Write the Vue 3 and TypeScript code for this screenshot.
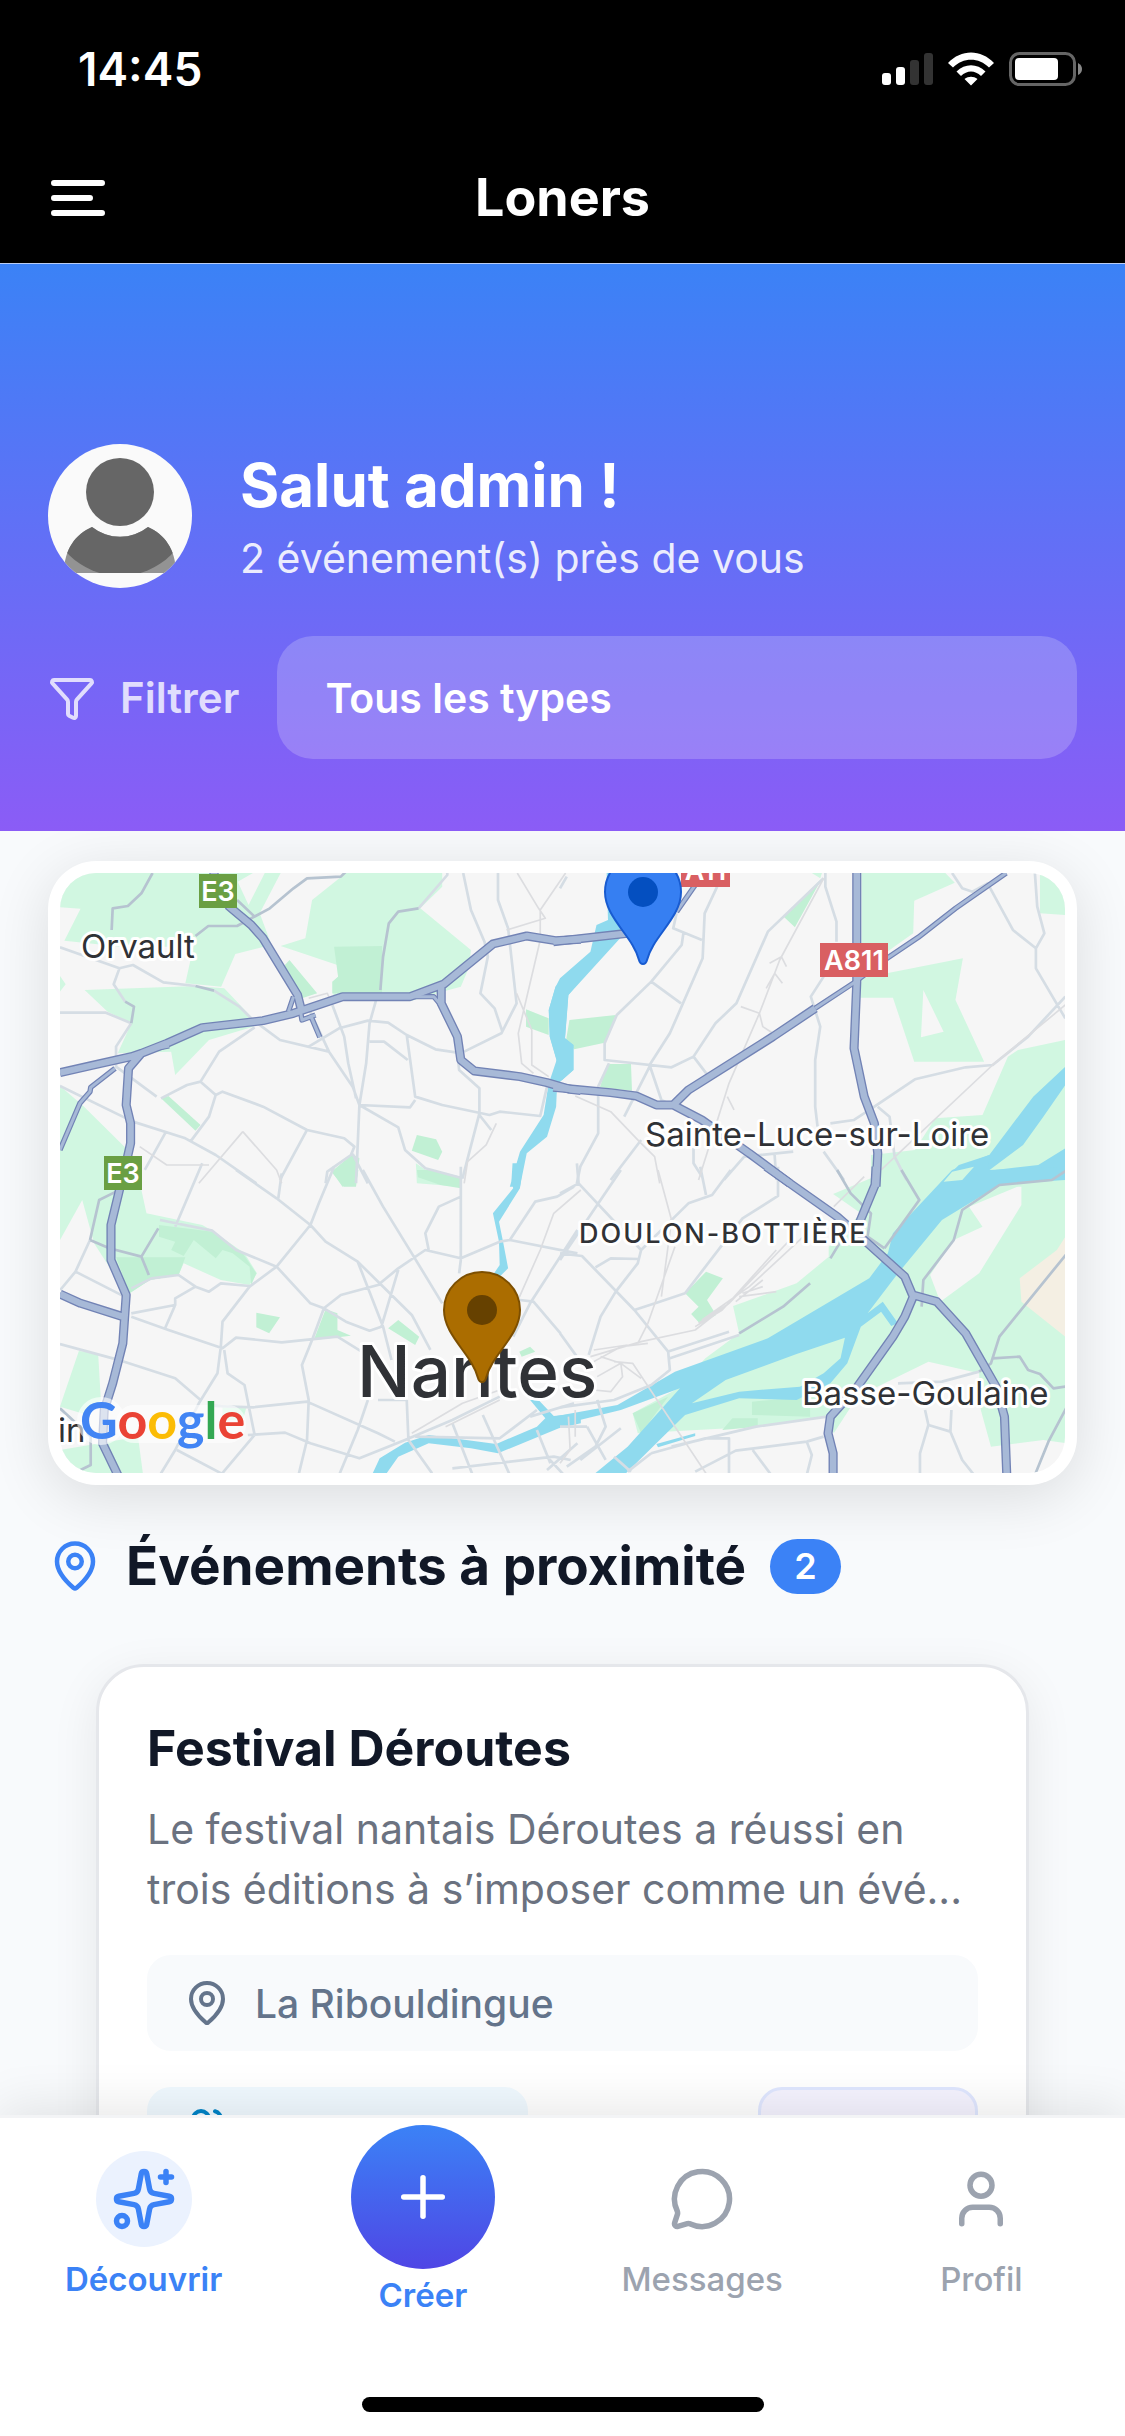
<script setup lang="ts">
import { ref } from 'vue'

interface Tile {
  transform: string
  meadow: string
  park: string
  river: string
  island: string
  sand: string
  street: string
  rail: string
  road: string
  ramp: string
  motorway: string
}

interface Tab {
  label: string
  active: boolean
  create: boolean
  paths: string[]
  circles: { cx: number; cy: number; r: number }[]
}

const eventType = ref('all')
const eventCount = 2

const pinPath =
  'M20 10c0 4.993-5.539 10.193-7.399 11.799a1 1 0 0 1-1.202 0C9.539 20.193 4 14.993 4 10a8 8 0 0 1 16 0'
const markerPath =
  'M-38 0A38 38 0 1 1 38 0C38 26 10 44 4 68Q3 72 0 72Q-3 72-4 68C-10 44-38 26-38 0Z'

// Each tile is digitised on its own grid, about three units to a map pixel.
const tiles: Tile[] = [
  {
    transform: 'translate(-20 -23) scale(.338 .3333)',
    meadow:
      'M59 69H630L585 95L617 165L665 69H712L650 190L685 285L578 312L536 410L430 400L460 262L400 290H240L72 272L120 176L59 172Z M905 69H1190V110L1125 175L1275 300L1270 350L1245 410L1190 425L1100 452H880L865 430V395L882 380L880 345L712 288L785 265L805 150Z M132 420L460 408L545 415L625 500L630 530L500 570L400 675L388 605L230 610L270 520L200 485Z M59 378L76 403L59 425Z M59 708L125 765L250 890V1000H59Z M1112 940L1142 960L1245 985V1010L1115 1000Z',
    park: 'M870 290L1012 288V428L865 430V395L882 380Z M738 330L820 430L775 445L720 350Z M358 745L380 738L475 825L460 842Z M1115 855L1172 868L1190 905L1178 930L1100 902Z M925 912L945 925L935 1010H900L862 965Z M1438 478L1505 505V555L1438 530Z',
    river:
      'M1600 340L1568 365L1525 410L1505 480L1508 560L1528 630L1525 690L1505 700L1490 795L1420 905L1390 1010H1420L1440 910L1500 860L1527 770L1530 700L1545 690L1578 660V585L1553 565L1563 435L1600 390Z',
    island: '',
    sand: '',
    street:
      'M59 292L235 355L275 345L365 397L460 408M515 422L590 470L630 510L710 570L855 605L925 710L945 765L1060 832L1080 900L1140 955L1250 985M235 355L218 403L252 455M270 520L225 590V650L345 740M59 488H195L270 520M855 605L795 475M795 590L885 535L970 512L1030 518L1085 555L1170 598L1235 608M865 465L900 560L912 640L935 745M1000 430L975 520L965 640L945 765L935 1000M975 575H1018L1088 630M1085 555L1110 740L1190 765L1330 795L1360 785L1480 798L1500 710M945 765L1095 772L1110 750M1255 605L1365 550L1410 460L1385 235L1355 150V69M1205 69V75L1120 175M1252 69L1275 180L1315 275L1325 320L1303 430L1345 475L1368 545M59 708L275 815L430 865L520 915L640 1000M358 745L435 705L475 695L520 735L500 800L445 875M475 695L530 605L635 532M520 735L540 725L660 770L790 840L900 865L930 890L920 915L850 965L845 1000M790 840L710 990M370 850L310 960M925 912L970 1000M1235 608L1240 660L1300 715V790L1250 985M1300 795L1335 840',
    rail: 'M1412 69L1475 175L1495 205L1380 240M1555 69L1480 180V270L1415 550L1425 640L1460 670M1410 430L1455 540V645L1505 680M1350 820L1320 885L1265 935L1255 1000M600 845L470 1000M600 845L700 960L715 1000M295 890L375 945H500M795 445L850 430L865 465',
    road: 'M212 240L215 175L260 168L300 130L333 69M460 258L498 228H583L680 175L750 115L790 85L890 80L905 65M1007 420L1015 320L1032 220L1060 185L1120 175M460 408L515 422M252 455L278 470L270 520M583 150L635 200',
    ramp: 'M59 900L118 760L148 725L150 712L222 655M750 440L735 485M770 480L775 510L815 495M320 600L382 588M800 495L828 562M1095 440H1165L1190 470',
    motorway:
      'M59 668L160 645L270 620L300 610L375 580L480 533L660 512L750 490L895 440H1095L1195 402L1340 282L1440 258L1525 272L1600 268M512 60L520 90L560 170L625 225L660 265L762 435L772 475M300 610L262 655L255 765L268 820V880L258 925M1187 410V460L1235 560L1245 630L1285 663L1420 680L1500 698L1568 718L1600 722',
  },
  {
    transform: 'translate(500 -23) scale(.338 .3333)',
    meadow:
      'M892 69H1140L1168 98L1048 152L1045 250L892 360Z M892 385L1192 325L1170 450L1255 635H1048L985 443H888ZM1075 420L1135 545L1068 562Z M1420 75H1495V195L1420 190Z M1495 570L1355 600L1325 620L1250 795L1110 805L1050 900L920 915V1010H1495Z M745 69H775L770 85Z',
    park: 'M775 85L695 232L662 200Z M28 510L165 495L132 578L42 598L18 570Z M140 642H210L213 722L118 712Z',
    river:
      'M138 69H260L200 240L25 435L15 565L40 585V660L0 695L-20 710L-33 700L-10 630L-30 560L-33 480L-13 410L0 385L90 305L108 225L142 210Z M1125 1000L1180 945L1270 915L1400 740L1495 650V705L1430 800L1370 885L1268 962L1415 945L1495 895V990L1190 1010Z',
    island: '',
    sand: '',
    street:
      'M465 110L428 190L422 325L325 550L265 645L300 750L400 800M420 270L335 235L345 190M365 250L360 285L270 395L168 495L132 580V630L330 652L395 620L440 680M270 395L358 460M395 620L460 520L522 460L615 245L780 85M785 69V110L818 215V275M780 380L742 440L770 530L755 630V770L762 830M145 640L113 710V850L60 950L50 1000M265 650L190 800M150 990L240 870M930 770L1050 688L1200 652L1280 645L1385 560L1495 440M930 770L870 810L800 820M940 770L975 800L990 920L1025 990M1160 69L1190 115L1220 125L1265 100L1340 240L1408 295V355L1495 505M1405 69L1412 170L1433 250L1408 295M0 115L20 80M485 990L545 920L690 905M395 880V940L420 980M635 915L640 990M780 905L840 990',
    rail: 'M780 85L650 330L590 490L500 700L410 990M45 738L150 785L240 880L280 920L295 1000M1495 465L1280 645L950 960M590 490L600 530L630 550M535 470L590 490M620 340L655 320L670 350M610 415L635 370L658 400M495 740L515 780',
    road: '',
    ramp: 'M755 475L870 398L960 330L1060 262L1170 175L1320 69M345 185L400 105',
    motorway:
      'M-20 275L200 250M-20 712L150 728L225 738L285 765H335L420 810L560 910L680 1000M335 765L380 720L630 560L755 475M878 60V398L870 595L900 740L930 820L940 910L935 1010',
  },
  {
    transform: 'translate(-20 297) scale(.338 .3333)',
    meadow:
      'M59 20V210L125 90L160 220L230 330L265 370L325 330L410 315L425 280L535 330L620 345L642 310L605 250L510 182L480 165L315 130L300 60V0L250-70H59Z M115 543L172 550L180 690L140 735L59 710Z M59 840L290 800L305 915H59Z M540 712L610 715L600 750H540Z',
    park: 'M352 165L510 185L600 250L640 310L625 345L620 290L570 250L540 240L520 265L455 210L425 258L388 240L400 215L352 200Z M225 262H430L410 315L325 330L265 370Z M640 428L710 442L678 490L640 472Z M845 418L880 430V480L920 497L810 510Z M1060 450L1122 500L1110 525L1030 475Z M860 0H942L935 40L895 50Z M1115 0H1160L1245 20V55L1185 45L1118 22Z M1418 545L1450 530L1465 545L1425 560Z',
    river:
      'M1398-20L1395 30L1400 55L1340 130L1358 215L1360 285L1330 330H1350L1385 295L1370 215L1358 155L1420 55L1430-20Z M982 915L1005 865L1080 818L1150 795L1350 822L1470 770L1495 745L1450 690H1475L1520 738L1600 730V760L1535 775L1355 850L1275 835L1150 820L1060 860L1022 915Z',
    island: '',
    sand: '',
    street:
      'M480-20L400 170M580 0L700 85L800 165L845 215L940 275L1010 345L1100 435L1155 540M715 10L705 85M870-10L825 100L800 165L700 290L620 350L540 455L535 530L525 610L470 700L400 840L355 915M355 150L510 182L580 240L700 290L800 400L840 415L905 455L975 482L1010 470L1060 300M270 440L380 480L540 535L580 503L715 517L880 500L960 550M545 540L555 610L605 645L635 795L535 915M59 522L240 572L400 625L475 690M955 0L1015 110L1100 250L1190 400M1245-10V270L1240 310M1245 80L1180 110L1140 190L1150 240M1360 215L1245 265L1140 240L1060 295L1000 345L890 375L840 415L805 510L775 585L795 690L790 810L765 915M940 275L1015 470L1040 570M405 840L545 915M615 795L725 788L800 820L945 865L1080 810L1220 750L1360 680M515 708L630 712L790 695L1000 790L1050 815M1000 690H1085M970 690L940 780L885 915M1085 690L1090 810L1160 910M1360 215L1390 210L1590 250M1390 210L1465 95L1530 80L1580 50M1590 180L1450 400L1400 500M1420 390L1460 395L1540 490M148 210L105 305L60 360M105 305L250 380M270 355L330 325L410 315L460 350L500 365L535 340L620 348M270 430L400 405V385L460 350M400 405L370 475M1220 760L1280 915M1310 735L1390 915M1110 800L1360 805L1470 720M1220 895L1520 860L1570 870M1450 740L1580 700M1500 860L1550 915M1500 900L1590 820M1470 780L1510 880',
    rail: 'M1600 60L1520 130L1480 240L1410 400M1100 790L1250 700L1360 660M1200 770L1360 690',
    road: 'M148 210L205 235L300 260L350 175M300 260L322 315M148 210L175 90L225 65M59 715L150 800V885L120 900',
    ramp: '',
    motorway:
      'M258-35L235 60L210 165V270L255 375L245 520L215 640L190 720L185 820L235 925M59 372L120 400L245 440',
  },
  {
    transform: 'translate(500 297) scale(.338 .3333)',
    meadow:
      'M775 10L808 72L930 20L1050-40H1500V820L1430 810L1275 830L1245 720L1240 610L1090 575L960 640L880 680L810 790L790 740L580 770L230 790L215 730L350 655L430 565L530 490L512 408L700 340L795 260V230L890 130L808 72Z M1210 110L1365 45V105L1240 310L1125 395L1095 315L1165 210L1250 170Z',
    park: 'M432 305L482 325L435 390L462 435L415 462L388 432L410 410L370 370Z M215 730L320 680L240 790Z M480 780L510 745H585V770Z M568 695L740 680V740L568 735Z',
    river:
      'M-30 742L170 705L340 605L615 505L915 325L970 250L985 190L1160 0L1270-45L1268 0L1495-10V18L1300 45L1130 150L1000 310L910 430L890 470L850 580L800 640L700 690L530 685L370 735L285 820L190 915H98L200 830L355 655L180 720L-30 772Z M910 430L955 395L1000 460L980 468L950 425L890 470Z M285 822L400 790V798L290 832Z',
    island: 'M390 700L490 630L700 552L843 503L830 565L780 610L710 650L530 665Z M1135 35L1160 5L1225-10L1190 30Z',
    sand: 'M1495 200L1470 240L1360 325L1365 395L1495 500Z',
    street:
      'M0 70L55 40L50-20M55 40L240 240M0 270L180 0M0 250L65 258L220 420L320 545L325 600L270 645L160 690L0 712M240 240L230 280L165 365L120 440L85 555M105 292L150 265L235 267M240 240L380 100L450 75L505 0M415-10L432 75M645-10V78L540 145L370 370L295 395L220 420M325 565L530 495M318 545L500 485M0 490L50 560M270 850L430 805H500V915M400 905L520 842L730 815L780 800M570 840L625 915M730 815L745 855L730 915M330 830L580 770L790 740M200 905L270 850M160 860L210 905M1080 720L1090 765L1065 850V915M1090 765L1155 785L1190 870L1225 915M1155 785L1158 720M1000 640L1130 635L1240 605M110 690L135 770L105 830L20 890M80 770L135 870M0 770H80M180 775L60 870',
    rail: 'M290 0L330 150L300 380M340 230L260 460L230 520M410 460L500 400L680 210M420 450L560 350L720 200M400 470L480 420L640 240M520 395L600 330M530 380L640 365M540 370L600 350M90 560L240 515L400 480L500 400M100 575L180 530L260 520M120 560L180 580L185 620L150 665L100 660M160 575L215 580L435 915M100 540L200 525M900 20L810 110M25 740L30 840L0 880M45 720V800M110 620L180 580L240 625',
    road: 'M530 490L660 410L740 340M800 265L830 215M1070 410L1075 330L1165 210L1190 120L1300 45L1455 30L1500 0M1500 250L1300 500L1275 580L1240 605M1280 565L1360 560L1385 600L1420 612L1460 655L1495 650M1500 710L1445 815L1405 915M960 235L1063 90L1010 0M820 0L860 70L920 130L910 200L960 235',
    ramp: '',
    motorway:
      'M610-10L820 140L905 215L1020 320L1045 380L1020 440L985 500L880 650L800 740L793 790L808 850V920M935-10L932 45L885 160M1045 375L1115 395L1200 490L1290 650L1315 740L1322 920',
  },
]

const layers = ['meadow', 'park', 'sand', 'river', 'island', 'street', 'rail', 'road'] as const

const shields = [
  { name: 'E3', x: 139, y: 1, width: 38, kind: 'euro' },
  { name: 'E3', x: 44, y: 283, width: 38, kind: 'euro' },
  { name: 'A811', x: 760, y: 70, width: 68, kind: 'auto' },
  { name: 'A11', x: 621, y: -20, width: 49, kind: 'auto' },
]

const tabs: Tab[] = [
  {
    label: 'Découvrir',
    active: true,
    create: false,
    paths: [
      'M11.017 2.814a1 1 0 0 1 1.966 0l1.051 5.558a2 2 0 0 0 1.594 1.594l5.558 1.051a1 1 0 0 1 0 1.966l-5.558 1.051a2 2 0 0 0-1.594 1.594l-1.051 5.558a1 1 0 0 1-1.966 0l-1.051-5.558a2 2 0 0 0-1.594-1.594l-5.558-1.051a1 1 0 0 1 0-1.966l5.558-1.051a2 2 0 0 0 1.594-1.594z',
      'M20 2v4',
      'M22 4h-4',
    ],
    circles: [{ cx: 4, cy: 20, r: 2 }],
  },
  { label: 'Créer', active: true, create: true, paths: ['M5 12h14', 'M12 5v14'], circles: [] },
  {
    label: 'Messages',
    active: false,
    create: false,
    paths: [
      'M2.992 16.342a2 2 0 0 1 .094 1.167l-1.065 3.29a1 1 0 0 0 1.236 1.168l3.413-.998a2 2 0 0 1 1.099.092 10 10 0 1 0-4.777-4.719',
    ],
    circles: [],
  },
  {
    label: 'Profil',
    active: false,
    create: false,
    paths: ['M19 21v-2a4 4 0 0 0-4-4H9a4 4 0 0 0-4 4v2'],
    circles: [{ cx: 12, cy: 7, r: 4 }],
  },
]
</script>

<template>
  <div class="app">
    <header class="top">
      <div class="status">
        <span class="time">14:45</span>
        <svg class="status-icons" viewBox="0 0 201 34" aria-hidden="true">
          <rect x="0" y="21" width="9" height="12" rx="3" fill="#fff" />
          <rect x="14" y="15" width="9" height="18" rx="3" fill="#fff" />
          <rect x="28" y="8" width="9" height="25" rx="3" fill="#333" />
          <rect x="42" y="1" width="9" height="32" rx="3" fill="#333" />
          <path
            fill="#fff"
            d="M66 11C79-3 99-3 112 11L107 15.500C97 5 81 5 71 15.500ZM74.500 19.500C83 11 95 11 103.500 19.500L99 24C93 18 85 18 79 24ZM82.500 27C86.500 24 91.500 24 95.500 27L89 33.500Z"
          />
          <rect x="128.500" y="1.500" width="64" height="31" rx="9" fill="none" stroke="#666" stroke-width="3" />
          <rect x="133" y="6" width="43" height="22" rx="4" fill="#fff" />
          <path d="M196 11Q200 13 200 17T196 23Z" fill="#888" />
        </svg>
      </div>
      <div class="bar">
        <button class="menu" type="button" aria-label="Menu">
          <svg viewBox="0 0 54 36" aria-hidden="true">
            <path d="M3 3H51M3 18H39M3 33H51" fill="none" stroke="#fff" stroke-width="6" stroke-linecap="round" />
          </svg>
        </button>
        <h1 class="brand">Loners</h1>
      </div>
    </header>

    <main class="page">
      <section class="hero">
        <div class="welcome">
          <svg class="avatar" viewBox="0 0 144 144" role="img" aria-label="Avatar">
            <clipPath id="disc"><circle cx="72" cy="72" r="72" /></clipPath>
            <clipPath id="chest"><circle cx="72" cy="60" r="72" /></clipPath>
            <g clip-path="url(#disc)">
              <rect width="144" height="144" fill="#fafafa" />
              <circle cx="72" cy="48" r="34" fill="#666" />
              <path d="M16 129C16 105 28 90 44 83A45 45 0 0 0 100 83C116 90 128 105 128 129Z" fill="#939393" />
              <path
                clip-path="url(#chest)"
                d="M16 129C16 105 28 90 44 83A45 45 0 0 0 100 83C116 90 128 105 128 129Z"
                fill="#666"
              />
            </g>
          </svg>
          <div class="greeting">
            <h2>Salut admin !</h2>
            <p>{{ eventCount }} événement(s) près de vous</p>
          </div>
        </div>
        <div class="filter">
          <label for="event-type">
            <svg class="icon" viewBox="0 0 24 24" aria-hidden="true">
              <path
                d="M10 20a1 1 0 0 0 .553.895l2 1A1 1 0 0 0 14 21v-7a2 2 0 0 1 .517-1.341L21.740 4.670A1 1 0 0 0 21 3H3a1 1 0 0 0-.742 1.670l7.225 7.989A2 2 0 0 1 10 14z"
              />
            </svg>
            Filtrer
          </label>
          <select id="event-type" v-model="eventType">
            <option value="all">Tous les types</option>
          </select>
        </div>
      </section>

      <section class="map-card">
        <svg class="map" viewBox="0 0 1005 600" preserveAspectRatio="xMidYMid slice">
          <rect width="1005" height="600" fill="#f6f6f6" />
          <g v-for="layer in layers" :key="layer">
            <path v-for="(tile, i) in tiles" :key="i" :class="layer" :transform="tile.transform" :d="tile[layer]" />
          </g>
          <g class="casing">
            <g v-for="(tile, i) in tiles" :key="i" :transform="tile.transform">
              <path class="ramp" :d="tile.ramp" />
              <path class="motorway" :d="tile.motorway" />
            </g>
          </g>
          <g class="surface">
            <g v-for="(tile, i) in tiles" :key="i" :transform="tile.transform">
              <path class="ramp" :d="tile.ramp" />
              <path class="motorway" :d="tile.motorway" />
            </g>
          </g>
          <g v-for="(shield, i) in shields" :key="i" :class="shield.kind">
            <rect :x="shield.x" :y="shield.y" :width="shield.width" height="34" />
            <text class="shield" :x="shield.x + shield.width / 2" :y="shield.y + 27">{{ shield.name }}</text>
          </g>
          <text class="town" x="21" y="85">Orvault</text>
          <text class="town" x="585" y="273">Sainte-Luce-sur-Loire</text>
          <text class="town" x="742" y="532">Basse-Goulaine</text>
          <text class="town" x="-2" y="569">in</text>
          <text class="district" x="519" y="370">DOULON-BOTTIÈRE</text>
          <text class="city" x="297" y="524">Nantes</text>
          <g class="google-halo">
            <circle cx="41" cy="548" r="24" />
            <rect x="56" y="532" width="130" height="38" rx="18" />
          </g>
          <text class="google" x="20" y="566">
            <tspan fill="#4285f4">G</tspan><tspan fill="#ea4335">o</tspan><tspan fill="#fbbc05">o</tspan
            ><tspan fill="#4285f4">g</tspan><tspan fill="#34a853">l</tspan><tspan fill="#ea4335">e</tspan>
          </text>
          <g transform="translate(583 19)">
            <path :d="markerPath" fill="#367ff2" stroke="#185bd0" stroke-width="2" />
            <circle r="15" fill="#044fc0" />
          </g>
          <g transform="translate(422 437)">
            <path :d="markerPath" fill="#ab6d00" stroke="#7d4f00" stroke-width="2" />
            <circle r="15" fill="#664100" />
          </g>
        </svg>
      </section>

      <section class="nearby">
        <div class="nearby-head">
          <svg class="icon pin" viewBox="0 0 24 24" aria-hidden="true">
            <path :d="pinPath" />
            <circle cx="12" cy="10" r="3" />
          </svg>
          <h2>Événements à proximité</h2>
          <span class="count">{{ eventCount }}</span>
        </div>

        <article class="event">
          <h3>Festival Déroutes</h3>
          <p class="summary">Le festival nantais Déroutes a réussi en trois éditions à s’imposer comme un évé...</p>
          <p class="place">
            <svg class="icon" viewBox="0 0 24 24" aria-hidden="true">
              <path :d="pinPath" />
              <circle cx="12" cy="10" r="3" />
            </svg>
            La Ribouldingue
          </p>
          <div class="event-foot">
            <div class="people">
              <svg class="icon" viewBox="0 0 24 24" aria-hidden="true">
                <path d="M16 21v-2a4 4 0 0 0-4-4H6a4 4 0 0 0-4 4v2M16 3.128a4 4 0 0 1 0 7.744M22 21v-2a4 4 0 0 0-3-3.870" />
                <circle cx="9" cy="7" r="4" />
              </svg>
            </div>
            <div class="tag"></div>
          </div>
        </article>
      </section>
    </main>

    <nav class="tabs">
      <div class="tab-row">
        <a
          v-for="tab in tabs"
          :key="tab.label"
          href="#"
          class="tab"
          :class="{ active: tab.active, create: tab.create }"
        >
          <span class="bubble">
            <svg class="icon" viewBox="0 0 24 24" aria-hidden="true">
              <path v-for="d in tab.paths" :key="d" :d="d" />
              <circle v-for="c in tab.circles" :key="c.cx" :cx="c.cx" :cy="c.cy" :r="c.r" />
            </svg>
          </span>
          <span class="tab-label">{{ tab.label }}</span>
        </a>
      </div>
      <div class="home"></div>
    </nav>
  </div>
</template>

<style>
body {
  margin: 0;
  background: #f8fafc;
}
</style>

<style scoped>
.app {
  display: flex;
  flex-direction: column;
  height: 100vh;
  overflow: hidden;
  font-family: Inter, 'Liberation Sans', sans-serif;
  background: #f8fafc;
}
h1,
h2,
h3,
p {
  margin: 0;
}
.icon {
  flex: none;
  width: 48px;
  height: 48px;
  fill: none;
  stroke: currentColor;
  stroke-width: 2;
  stroke-linecap: round;
  stroke-linejoin: round;
}
.top {
  flex: none;
  color: #fff;
  background: #000;
  border-bottom: 1px solid #b9cdf5;
}
.status {
  display: flex;
  align-items: center;
  justify-content: space-between;
  height: 132px;
  padding: 6px 42px 0 78px;
  box-sizing: border-box;
}
.time {
  font-size: 46px;
  font-weight: 600;
}
.status-icons {
  width: 201px;
  height: 34px;
}
.bar {
  display: grid;
  grid-template-columns: 1fr auto 1fr;
  align-items: center;
  height: 131px;
  padding: 0 51px;
}
.menu {
  display: flex;
  width: 54px;
  height: 36px;
  padding: 0;
  border: 0;
  background: none;
}
.brand {
  font-size: 52px;
  font-weight: 700;
  line-height: 66px;
}
.page {
  flex: 1 1 0;
  min-height: 0;
  overflow: hidden;
}
.hero {
  position: relative;
  z-index: 1;
  display: flex;
  flex-direction: column;
  gap: 48px;
  padding: 180px 48px 72px;
  color: #fff;
  background: linear-gradient(#3b82f6, #8b5cf6);
}
.welcome {
  display: flex;
  align-items: center;
  gap: 48px;
}
.avatar {
  width: 144px;
  height: 144px;
}
.greeting {
  display: flex;
  flex-direction: column;
  gap: 12px;
}
.greeting h2 {
  font-size: 60px;
  font-weight: 700;
  line-height: 72px;
}
.greeting p {
  font-size: 41px;
  line-height: 50px;
  color: rgba(255, 255, 255, 0.88);
}
.filter {
  display: flex;
  align-items: center;
  gap: 38px;
}
.filter label {
  display: flex;
  align-items: center;
  gap: 24px;
  font-size: 42px;
  font-weight: 600;
  color: rgba(255, 255, 255, 0.78);
}
.filter select {
  flex: 1;
  height: 123px;
  padding: 0 48px;
  border: 0;
  border-radius: 36px;
  appearance: none;
  font-family: inherit;
  font-size: 41px;
  font-weight: 600;
  color: #fff;
  background: rgba(255, 255, 255, 0.2);
}
.map-card {
  margin: 30px 48px 0;
  padding: 12px;
  border-radius: 48px;
  background: #fff;
  box-shadow: 0 12px 60px rgba(0, 0, 0, 0.12);
}
.map {
  display: block;
  width: 100%;
  height: 600px;
  border-radius: 36px;
}
.meadow,
.island {
  fill: #d1f7e1;
  fill-rule: evenodd;
}
.park {
  fill: #c1f0d4;
}
.sand {
  fill: #f4efe3;
}
.river {
  fill: #8fdaee;
}
.street,
.rail,
.road,
.ramp,
.motorway {
  fill: none;
  stroke-linejoin: round;
}
.street {
  stroke: #d5dde4;
  stroke-width: 8;
}
.rail {
  stroke: #dcdde0;
  stroke-width: 5;
}
.road {
  stroke: #b6c3d0;
  stroke-width: 8;
}
.casing {
  stroke: #7283b5;
}
.casing .ramp {
  stroke-width: 16;
}
.casing .motorway {
  stroke-width: 27;
}
.surface {
  stroke: #a7b9d7;
}
.surface .ramp {
  stroke-width: 9;
}
.surface .motorway {
  stroke-width: 19;
}
.euro rect {
  fill: #6a9f43;
}
.auto rect {
  fill: #d95f62;
}
.shield {
  font-size: 27px;
  font-weight: 600;
  text-anchor: middle;
  fill: #fff;
}
.town,
.district,
.city {
  fill: #303236;
  stroke: #fff;
  stroke-width: 6;
  stroke-linejoin: round;
  paint-order: stroke;
}
.town {
  font-size: 33px;
}
.district {
  font-size: 27px;
  font-weight: 500;
  letter-spacing: 2px;
}
.city {
  font-size: 71px;
  font-weight: 500;
}
.google {
  font-family: Lato, sans-serif;
  font-size: 52px;
  font-weight: 700;
}
.google-halo {
  fill: rgba(255, 255, 255, 0.6);
}
.nearby {
  padding: 48px 48px 0;
}
.nearby-head {
  display: flex;
  align-items: center;
  height: 66px;
}
.pin {
  width: 54px;
  height: 54px;
  margin-right: 24px;
  color: #3b82f6;
}
.nearby-head h2 {
  margin-right: 24px;
  font-size: 53px;
  font-weight: 700;
  line-height: 66px;
  color: #111827;
}
.count {
  padding: 0 24px;
  border-radius: 28px;
  font-size: 36px;
  font-weight: 600;
  line-height: 55px;
  color: #fff;
  background: #3b82f6;
}
.event {
  margin: 65px 48px 0;
  padding: 48px;
  border: 3px solid #e5e7eb;
  border-radius: 48px;
  background: #fff;
  box-shadow: 0 12px 48px rgba(0, 0, 0, 0.08);
}
.event h3 {
  font-size: 50px;
  font-weight: 700;
  line-height: 66px;
  color: #111827;
}
.summary {
  margin-top: 18px;
  font-size: 41px;
  line-height: 60px;
  color: #6b7280;
}
.place {
  display: flex;
  align-items: center;
  gap: 24px;
  height: 96px;
  margin-top: 36px;
  padding: 0 36px;
  border-radius: 24px;
  font-size: 39px;
  font-weight: 500;
  color: #64748b;
  background: #f8fafc;
}
.event-foot {
  display: flex;
  justify-content: space-between;
  margin-top: 36px;
}
.people {
  width: 381px;
  height: 90px;
  padding: 18px 36px;
  box-sizing: border-box;
  border-radius: 24px;
  color: #0284c7;
  background: #f0f9ff;
}
.tag {
  width: 220px;
  height: 90px;
  box-sizing: border-box;
  border: 3px solid #e0e7ff;
  border-radius: 24px;
  background: #f5f3ff;
}
.tabs {
  position: relative;
  z-index: 2;
  flex: none;
  border-top: 3px solid #f3f4f6;
  background: #fff;
  box-shadow: 0 -6px 48px rgba(0, 0, 0, 0.1);
}
.tab-row {
  display: flex;
  height: 279px;
  padding: 0 4px;
}
.tab {
  display: flex;
  flex: 1 1 0;
  flex-direction: column;
  align-items: center;
  gap: 12px;
  padding-top: 33px;
  font-size: 33px;
  font-weight: 500;
  line-height: 40px;
  text-decoration: none;
  color: #9ca3af;
}
.bubble {
  display: flex;
  align-items: center;
  justify-content: center;
  width: 96px;
  height: 96px;
  border-radius: 50%;
}
.bubble .icon {
  width: 66px;
  height: 66px;
}
.active {
  font-weight: 600;
  color: #3b82f6;
}
.active .bubble {
  background: #ebf2fe;
}
.create {
  gap: 6px;
  padding-top: 7px;
}
.create .bubble {
  width: 144px;
  height: 144px;
  color: #fff;
  background: linear-gradient(#3b82f6, #4f46e5);
}
.home {
  width: 402px;
  height: 15px;
  margin: 0 auto 24px;
  border-radius: 8px;
  background: #000;
}
</style>
